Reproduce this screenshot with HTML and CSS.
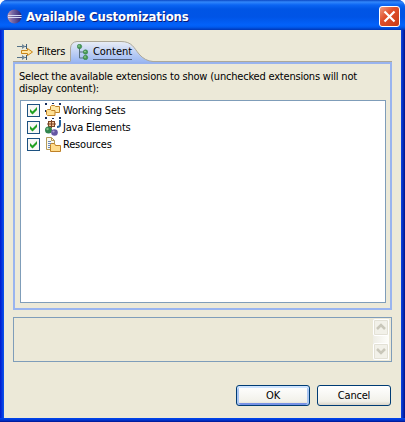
FILE: index.html
```html
<!DOCTYPE html>
<html lang="en">
<head>
<meta charset="utf-8">
<title>Available Customizations</title>
<link rel="stylesheet" href="styles.css">
</head>
<body>
<div class="window">
  <header class="titlebar">
    <svg class="logo" width="16" height="16" viewBox="0 0 16 16">
      <defs><linearGradient id="orb" x1="0" y1="0" x2="1" y2="0"><stop offset="0" stop-color="#c59aae"/><stop offset=".35" stop-color="#7969a5"/><stop offset="1" stop-color="#2b2474"/></linearGradient></defs>
      <circle cx="7.5" cy="7.500" r="7" fill="url(#orb)"/>
      <path d="M1 6.5h13.5M1 8.500h13.5" stroke="#d6dcf5" stroke-width="1"/>
    </svg>
    <h1 class="title">Available Customizations</h1>
    <button class="close" aria-label="Close"><svg width="19" height="19" viewBox="0 0 19 19"><path d="M4.500 4.500l10 10M14.500 4.500l-10 10" stroke="#fff" stroke-width="2.2"/></svg></button>
  </header>
  <main class="body">
    <nav class="tabs">
      <div class="tab filters">
        <svg width="16" height="16" viewBox="0 0 16 16" fill="none">
          <path d="M0 2.500h9M0 13.500h9" stroke="#557187"/><path d="M5 0l3.500 2.500L5 5zM5 11l3.500 2.500L5 16z" fill="#718899"/><path d="M9.500 0v5M9.500 11v5" stroke="#405e78"/>
          <path d="M4.500 6.500h6v-2l5 3.500-5 3.500v-2h-6z" fill="#ffe7a5" stroke="#c98418"/>
        </svg>
        <span class="filters-label">Filters</span>
      </div>
      <div class="tab content">
        <svg class="tab-shape" width="83" height="21" viewBox="0 0 83 21">
          <defs><linearGradient id="tabfill" x1="0" y1="0" x2="0" y2="1"><stop offset="0" stop-color="#e9edf6"/><stop offset="1" stop-color="#9ab7f2"/></linearGradient></defs>
          <path d="M.5 21V7Q1 1 7 .5H51C62 .5 64 7 69 13Q75 20 83 20.500V21z" fill="url(#tabfill)"/>
          <path d="M.5 20V7Q1 1 7 .5H51C62 .5 64 7 69 13Q75 20 83 20.500" fill="none" stroke="#aca899"/>
        </svg>
        <svg class="tree" width="16" height="16" viewBox="0 0 16 16">
          <path d="M2.500 3v11H8M2.500 8H8" fill="none" stroke="#587080"/>
          <g fill="#4b9d58" stroke="#2f7d45" stroke-width=".6"><circle cx="2.500" cy="2.500" r="2.200"/><circle cx="8.500" cy="8" r="2.200"/><circle cx="8.500" cy="13.500" r="2.200"/></g>
          <g fill="#a7d8a4"><circle cx="2" cy="2" r=".8"/><circle cx="8" cy="7.500" r=".8"/><circle cx="8" cy="13" r=".8"/></g>
        </svg>
        <span class="content-label">Content</span>
      </div>
    </nav>
    <section class="panel">
      <p class="prompt">Select the available extensions to show (unchecked extensions will not<br>display content):</p>
      <ul class="list">
        <li class="row">
          <svg class="check" width="13" height="13" viewBox="0 0 13 13"><rect x=".5" y=".5" width="12" height="12" fill="#f7f7f4" stroke="#1c5180"/><path d="M3 5v3l2.500 2.500L10 6V3L5.500 7.500z" fill="#21a121"/></svg>
          <svg class="icon" width="17" height="17" viewBox="0 0 17 17">
            <path d="M0 0h2v2H0zM7 0h2v1H7zM14 0h2v2h-2zM0 14h2v2H0zM14 14h2v2h-2zM7 15h2v1H7zM0 7h1v2H0z" fill="#152d5d"/>
            <path d="M5.500 8.500v-5l1-1h3l1 1h4v6h-4z" fill="#ffe9a9" stroke="#bf8126"/><path d="M1.500 11.500v-4l1-1h3l1 1h3.500v5H2.500z" fill="#ffe094" stroke="#bf8126"/>
          </svg>
          <span class="name">Working Sets</span>
        </li>
        <li class="row">
          <svg class="check" width="13" height="13" viewBox="0 0 13 13"><rect x=".5" y=".5" width="12" height="12" fill="#f7f7f4" stroke="#1c5180"/><path d="M3 5v3l2.500 2.500L10 6V3L5.500 7.500z" fill="#21a121"/></svg>
          <svg class="icon" width="17" height="17" viewBox="0 0 17 17">
            <rect x="3.500" y="1.500" width="6" height="5" fill="#f3c292" stroke="#7a4527"/><path d="M6.500 0v8M2 4h9" stroke="#7a4527"/>
            <path d="M15 0v5q0 2-3 2" fill="none" stroke="#27649e" stroke-width="2"/>
            <circle cx="3.500" cy="10" r="3.500" fill="#32854e"/><circle cx="2.500" cy="9" r="1.200" fill="#83bd88"/><circle cx="9.500" cy="12.500" r="3.300" fill="#6557a4"/><circle cx="8.500" cy="11.500" r="1.100" fill="#aaa1d2"/>
          </svg>
          <span class="name">Java Elements</span>
        </li>
        <li class="row">
          <svg class="check" width="13" height="13" viewBox="0 0 13 13"><rect x=".5" y=".5" width="12" height="12" fill="#f7f7f4" stroke="#1c5180"/><path d="M3 5v3l2.500 2.500L10 6V3L5.500 7.500z" fill="#21a121"/></svg>
          <svg class="icon" width="17" height="17" viewBox="0 0 17 17">
            <path d="M1.500 12.500V.5h5l3 3v9z" fill="#f8f8ee" stroke="#b59a57"/><path d="M6.500.5v3h3" fill="none" stroke="#b59a57"/><path d="M3 4.500h3M3 6.500h4M3 8.500h2M3 10.500h2" stroke="#6b88bb"/>
            <path d="M5.500 14.500v-7l1-1h3l1 2h5v6z" fill="#ffdc8c" stroke="#bf8126"/>
          </svg>
          <span class="name">Resources</span>
        </li>
      </ul>
    </section>
    <section class="description">
      <div class="scrollbar">
        <div class="arrow"><svg width="14" height="14" viewBox="0 0 14 14"><path d="M3 9l4-4 4 4" fill="none" stroke="#c9c7ba" stroke-width="2.500"/></svg></div>
        <div class="arrow"><svg width="14" height="14" viewBox="0 0 14 14"><path d="M3 5l4 4 4-4" fill="none" stroke="#c9c7ba" stroke-width="2.500"/></svg></div>
      </div>
    </section>
    <footer class="actions">
      <button class="button default">OK</button>
      <button class="button">Cancel</button>
    </footer>
  </main>
</div>
</body>
</html>
```
FILE: styles.css
```css
* { box-sizing: border-box; }
body {
  margin: 0;
  background: #fff;
  color: #000;
  font: 11px/12px "DejaVu Sans Condensed", "DejaVu Sans", sans-serif;
  letter-spacing: -0.2px;
}
.window {
  position: relative;
  width: 405px;
  height: 422px;
  overflow: hidden;
  display: flex;
  flex-direction: column;
  border-radius: 7px 7px 0 0;
  background: #0043e2;
}
.window::after {
  content: "";
  position: absolute;
  left: 0;
  right: 0;
  bottom: 0;
  height: 4px;
  background: linear-gradient(#0047ef 0, #0037d4 50%, #00138c);
}
.titlebar {
  height: 30px;
  flex: none;
  display: flex;
  align-items: center;
  padding: 3px 5px 0 7px;
  background: linear-gradient(#0b48c4 0, #3287fb 2px, #0b65f3 5px, #0055e5 9px, #0054e6 17px, #0262fb 25px, #005bf0 27px, #0036b5 30px);
}
.title {
  flex: 1;
  margin: 0 0 0 3px;
  font: bold 13px/18px "DejaVu Sans Condensed", sans-serif;
  letter-spacing: -0.13px;
  color: #fff;
  text-shadow: 1px 1px #0b1c78;
  white-space: nowrap;
}
.close {
  width: 21px;
  height: 21px;
  padding: 0;
  border: 1px solid #fff;
  border-radius: 3px;
  background: linear-gradient(135deg, #f09a80, #e0502c 40%, #c83b14);
}
.close svg { display: block; }
.body {
  flex: 1;
  border: solid #0043e2;
  border-width: 0 4px 4px;
  border-image: linear-gradient(90deg, #0019cf, #0b55ed 4px, #0b45e5 calc(100% - 4px), #00138c) 4;
  background: #ece9d8;
  background-clip: padding-box;
  padding: 11px 9px 0;
}
.tabs { display: flex; height: 21px; border-bottom: 1px solid #aca899; }
.tab { display: flex; }
.filters { width: 57px; padding: 3px 0 0 4px; }
.filters-label { margin: 2px 0 0 4px; }
.content { position: relative; width: 83px; height: 21px; padding: 3px 0 0 7px; }
.tab-shape { position: absolute; left: 0; top: 0; }
.tree { position: relative; }
.content-label {
  position: relative;
  height: 16px;
  padding-top: 2px;
  border-bottom: 1px solid #566582;
  letter-spacing: -0.05px;
}
.panel {
  height: 248px;
  border: 2px solid #99b4ef;
  padding: 7px 4px 0;
}
.prompt { margin: 0; white-space: nowrap; }
.list {
  list-style: none;
  width: 366px;
  height: 203px;
  margin: 5px 0 0 1px;
  padding: 2px 0 0 6px;
  border: 1px solid #7f9db9;
  background: #fff;
}
.row { display: flex; height: 17px; }
.check { margin-top: 1px; }
.icon { margin-left: 5px; }
.name { margin: 2px 0 0 1px; white-space: nowrap; }
.description {
  height: 45px;
  margin-top: 7px;
  padding: 1px 2px 1px 1px;
  border: 1px solid #7f9db9;
  display: flex;
  justify-content: flex-end;
}
.scrollbar {
  width: 16px;
  height: 41px;
  display: flex;
  flex-direction: column;
  justify-content: space-between;
  background: linear-gradient(90deg, #eeede5, #fefefb);
}
.arrow {
  height: 17px;
  width: 16px;
  border: 1px solid #fff;
  border-radius: 2px;
  outline: 1px solid #e3e1d6;
  outline-offset: -2px;
  background: #f2f1e9;
}
.arrow svg { display: block; }
.actions { display: flex; justify-content: flex-end; gap: 7px; margin: 23px 1px 0 0; }
.button {
  width: 74px;
  height: 21px;
  padding: 1px 0 0;
  border: 1px solid #003c74;
  border-radius: 3px;
  background: linear-gradient(#fff, #f2f1ea 80%, #d9d4c8);
  color: #000;
  font: inherit;
  letter-spacing: -0.2px;
}
.default { box-shadow: inset 0 2px #cee4ff, inset 2px 0 #aac6f2, inset -2px 0 #aac6f2, inset 0 -2px #7792e5; }
```
